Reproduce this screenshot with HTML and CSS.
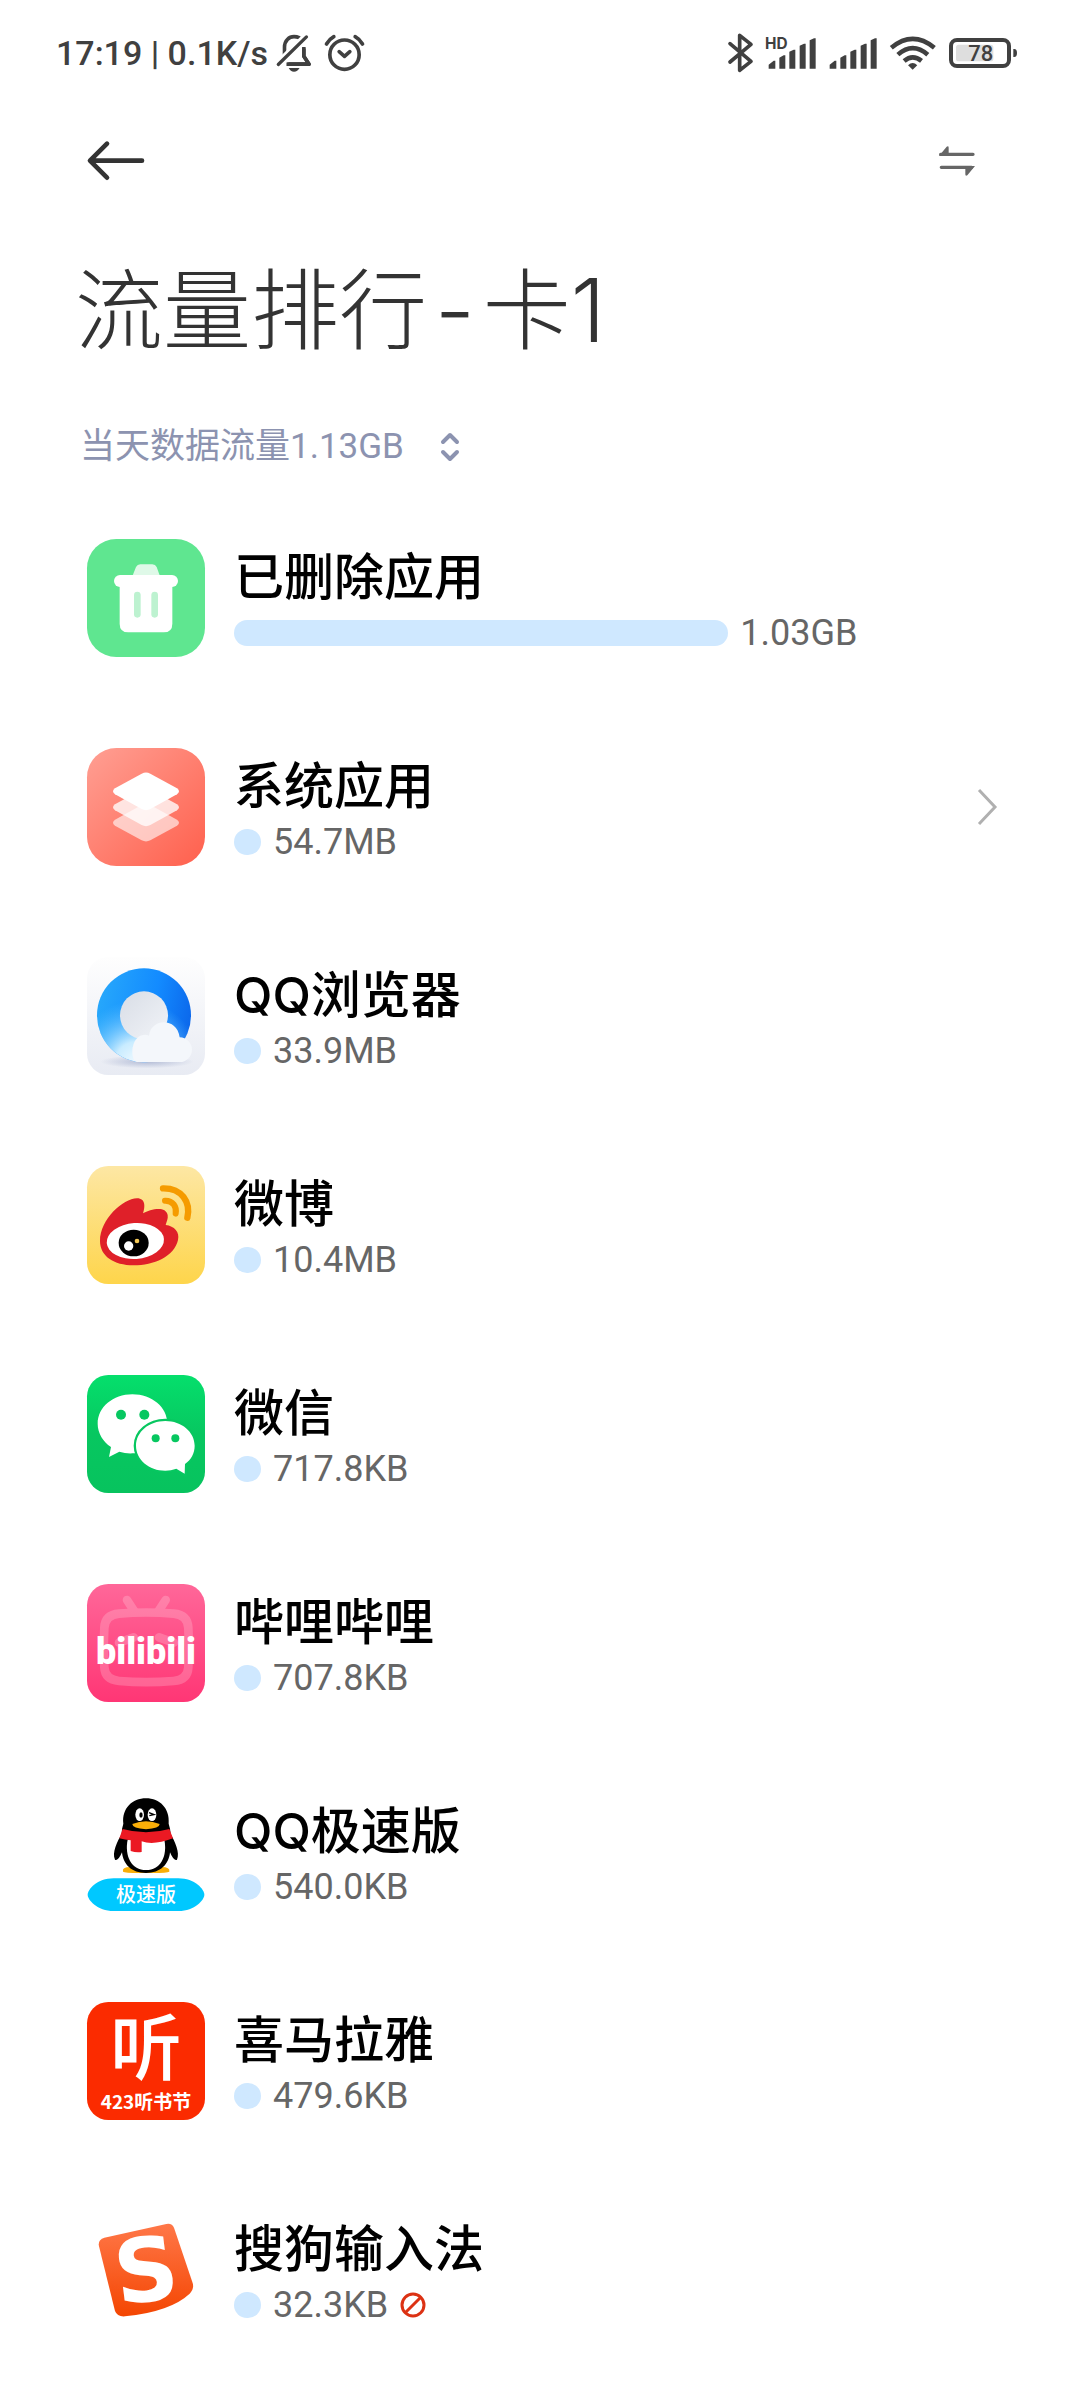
FILE: index.html
```html
<!DOCTYPE html>
<html lang="zh-CN">
<head>
	<meta charset="UTF-8">
	<meta name="viewport" content="width=device-width, initial-scale=1">
	<title>流量排行-卡1</title>
	<link rel="stylesheet" href="styles.css">
</head>
<body>
	<!-- Status bar -->
	<div class="status">
		<div class="status-left">
			<span>17:19 | 0.1K/s</span>
			<svg class="bell" viewBox="697 40 108 116" width="36" height="38">
				<path d="M722 108V80C722 60 736 48 751 48C762 48 771 52 776 60M781 80V108L797 132H728" fill="none" stroke="#404040" stroke-width="11" stroke-linejoin="round"/>
				<path d="M702 134L790 48" stroke="#fff" stroke-width="26"/>
				<path d="M703 133L789 49" stroke="#404040" stroke-width="10" stroke-linecap="round"/>
				<path d="M735 144H768Q762 155 751 155Q740 155 735 144Z" fill="#404040"/>
				<path d="M734 132H797L781 108V84" fill="none" stroke="#404040" stroke-width="11" stroke-linejoin="round"/>
			</svg>
			<svg viewBox="844 38 122 114" width="41" height="38">
				<circle cx="905" cy="100" r="44" fill="none" stroke="#404040" stroke-width="11"/>
				<path d="M889 91L905 105L921 91M851 68Q860 53 873 46M959 68Q950 53 937 46" fill="none" stroke="#404040" stroke-width="11" stroke-linecap="round" stroke-linejoin="round"/>
			</svg>
		</div>
		<div class="status-right">
			<svg viewBox="85 36 75 120" width="25" height="40">
				<path d="M91 68L154 121L120 148V43L154 70L91 123" fill="none" stroke="#404040" stroke-width="11" stroke-linecap="round" stroke-linejoin="round"/>
			</svg>
			<svg viewBox="195 40 150 112" width="50" height="38">
				<text class="hd" x="192" y="84">HD</text>
				<path d="M203 143V131L218 119H223V143ZM235 143V110L248 103H253V143ZM265 143V92L278 86H283V143ZM296 143V74L309 68H314V143ZM326 143V58L339 52H344V143Z" fill="#404040"/>
			</svg>
			<svg viewBox="381 40 144 112" width="48" height="38">
				<path d="M383 143V131L398 119H403V143ZM415 143V110L428 103H433V143ZM445 143V92L458 86H463V143ZM476 143V74L489 68H494V143ZM506 143V58L519 52H524V143Z" fill="#404040"/>
			</svg>
			<svg viewBox="563 40 140 112" width="46" height="38">
				<g fill="none" stroke="#404040" stroke-width="14">
					<path d="M567 80Q632 26 698 80"/>
					<path d="M587 101Q632 61 678 101"/>
					<path d="M606 120Q632 98 659 120"/>
				</g>
				<path d="M618 133Q632 120 646 133L632 147Z" fill="#404040"/>
			</svg>
			<svg viewBox="747 40 204 112" width="68" height="38">
				<rect x="753" y="57" width="174" height="78" rx="18" fill="none" stroke="#404040" stroke-width="12"/>
				<rect x="768" y="71" width="112" height="50" rx="8" fill="#dedede"/>
				<path d="M940 84Q951 82 951 96Q951 110 940 108Z" fill="#404040"/>
				<text class="level" x="842" y="121">78</text>
			</svg>
		</div>
	</div>

	<header class="appbar">
		<button type="button" aria-label="返回">
			<svg viewBox="143 362 174 120" width="58" height="40">
				<path d="M203 370L152 421L203 472M154 421H308" fill="none" stroke="#333" stroke-width="14" stroke-linecap="round" stroke-linejoin="round"/>
			</svg>
		</button>
		<button type="button" aria-label="切换">
			<svg viewBox="717 375 108 90" width="36" height="30">
				<path d="M722 400H819M724 439H815" stroke="#666" stroke-width="10" stroke-linecap="round"/>
				<path d="M717 405L740 377Q746 373 746 380V405ZM825 435L802 463Q796 467 796 460V435Z" fill="#666"/>
			</svg>
		</button>
	</header>

	<main>
		<h1>流量排行<span class="dash">-</span>卡1</h1>

		<div class="filter">
			<select aria-label="统计周期">
				<option>当天数据流量1.13GB</option>
			</select>
			<svg viewBox="0 0 20 30" width="20" height="30">
				<path d="M3 10L10 3L17 10M3 20L10 27L17 20" fill="none" stroke="#8c93b0" stroke-width="4" stroke-linecap="round" stroke-linejoin="round"/>
			</svg>
		</div>

		<ul class="apps">
			<li class="app">
				<svg class="icon" viewBox="0 0 354 354">
					<rect width="354" height="354" rx="88" fill="#5fe690"/>
					<path d="M136 112L147 84Q151 76 160 76H196Q205 76 209 84L219 112Z" fill="#dff9e8"/>
					<rect x="81" y="108" width="192" height="36" rx="18" fill="#fff"/>
					<path d="M98 125H256V254Q256 280 230 280H124Q98 280 98 254Z" fill="#fff"/>
					<rect x="141" y="158" width="20" height="78" rx="10" fill="#bdf2d0"/>
					<rect x="193" y="158" width="20" height="78" rx="10" fill="#bdf2d0"/>
				</svg>
				<div class="info">
					<h2>已删除应用</h2>
					<div class="usage"><span class="bar" style="width: 64.6%"></span>1.03GB</div>
				</div>
			</li>
			<li class="app">
				<svg class="icon" viewBox="0 0 354 354">
					<defs>
						<linearGradient id="sys" x1="0" y1="0" x2="1" y2="1">
							<stop offset="0" stop-color="#ff9f93"/>
							<stop offset="1" stop-color="#ff604d"/>
						</linearGradient>
						<path id="layer" d="M84 121L164 77Q177 70 190 77L270 121Q282 130 270 139L190 183Q177 190 164 183L84 139Q72 130 84 121Z"/>
					</defs>
					<rect width="354" height="354" rx="88" fill="url(#sys)"/>
					<use href="#layer" y="94" fill="#fff" opacity=".6"/>
					<use href="#layer" y="48" fill="#fff" opacity=".78"/>
					<use href="#layer" fill="#fff"/>
				</svg>
				<div class="info">
					<h2>系统应用</h2>
					<div class="usage"><span class="bar" style="width: 0%"></span>54.7MB</div>
				</div>
				<a class="more" href="#system" aria-label="系统应用详情">
					<svg viewBox="0 0 24 40" width="24" height="40">
						<path d="M4 3L20 20L4 37" fill="none" stroke="#b0b0b0" stroke-width="3"/>
					</svg>
				</a>
			</li>
			<li class="app">
				<svg class="icon" viewBox="0 0 354 354">
					<defs>
						<linearGradient id="qbBack" x1="0" y1="0" x2="0" y2="1">
							<stop offset="0" stop-color="#fefefe"/>
							<stop offset="1" stop-color="#e8ebf3"/>
						</linearGradient>
						<linearGradient id="qbRing" x1="0" y1=".3" x2="1" y2=".5">
							<stop offset="0" stop-color="#27a8fb"/>
							<stop offset=".6" stop-color="#138bff"/>
							<stop offset="1" stop-color="#0c69ec"/>
						</linearGradient>
						<radialGradient id="qbFade" cx="150" cy="320" r="190" gradientUnits="userSpaceOnUse">
							<stop offset="0" stop-color="#f2faff"/>
							<stop offset=".35" stop-color="#c9ecff"/>
							<stop offset="1" stop-color="#5cc4ff" stop-opacity="0"/>
						</radialGradient>
						<linearGradient id="qbHole" x1="0" y1="0" x2="1" y2="1">
							<stop offset="0" stop-color="#d8dde6"/>
							<stop offset="1" stop-color="#f2f4f8"/>
						</linearGradient>
						<radialGradient id="qbShadow">
							<stop offset="0" stop-color="#b3bcd6"/>
							<stop offset="1" stop-color="#b3bcd6" stop-opacity="0"/>
						</radialGradient>
					</defs>
					<rect width="354" height="354" rx="64" fill="url(#qbBack)"/>
					<ellipse cx="180" cy="314" rx="140" ry="20" fill="url(#qbShadow)"/>
					<circle cx="171" cy="175" r="141" fill="url(#qbRing)"/>
					<circle cx="171" cy="175" r="141" fill="url(#qbFade)"/>
					<circle cx="171" cy="175" r="72" fill="url(#qbHole)"/>
					<path d="M150 315C130 310 130 250 160 236Q176 230 186 236C192 184 270 180 278 241A37 37 0 0 1 278 315Z" fill="#f4f7fb"/>
				</svg>
				<div class="info">
					<h2>QQ浏览器</h2>
					<div class="usage"><span class="bar" style="width: 0%"></span>33.9MB</div>
				</div>
			</li>
			<li class="app">
				<svg class="icon" viewBox="0 0 354 354">
					<defs>
						<linearGradient id="wb" x1="0" y1="0" x2="0" y2="1">
							<stop offset="0" stop-color="#fde7a4"/>
							<stop offset="1" stop-color="#fed54b"/>
						</linearGradient>
					</defs>
					<rect width="354" height="354" rx="64" fill="url(#wb)"/>
					<path d="M39 225C39 160 108 98 150 97C177 97 174 125 168 142C190 130 236 118 242 147C244 158 238 168 236 177C262 180 279 198 273 222C262 272 200 298 140 298C80 298 39 270 39 225Z" fill="#df2029"/>
					<ellipse cx="145" cy="225" rx="86" ry="54" fill="#fff" transform="rotate(-4 145 225)"/>
					<ellipse cx="140" cy="231" rx="45" ry="40" fill="#000"/>
					<circle cx="125" cy="240" r="14" fill="#fff"/>
					<circle cx="150" cy="225" r="7" fill="#f5c956"/>
					<path d="M228 67C284 66 312 108 301 155" fill="none" stroke="#f59b00" stroke-width="19" stroke-linecap="round"/>
					<path d="M234 104C257 103 270 122 266 143" fill="none" stroke="#f59b00" stroke-width="18" stroke-linecap="round"/>
				</svg>
				<div class="info">
					<h2>微博</h2>
					<div class="usage"><span class="bar" style="width: 0%"></span>10.4MB</div>
				</div>
			</li>
			<li class="app">
				<svg class="icon" viewBox="0 0 354 354">
					<defs>
						<linearGradient id="wx" x1="0" y1="0" x2="0" y2="1">
							<stop offset="0" stop-color="#05df6c"/>
							<stop offset=".5" stop-color="#07c760"/>
							<stop offset="1" stop-color="#07c35e"/>
						</linearGradient>
					</defs>
					<rect width="354" height="354" rx="64" fill="url(#wx)"/>
					<path d="M136 58C78 58 32 97 32 146C32 174 48 200 72 216L66 246L97 230Q116 236 136 235C195 235 241 196 241 146C241 97 195 58 136 58Z" fill="#fff"/>
					<path d="M235 138C284 138 323 171 323 212C323 235 312 254 294 267L293 296L268 281Q252 287 235 287C186 287 147 254 147 212C147 171 186 138 235 138Z" fill="#fff" stroke="#07c760" stroke-width="14" paint-order="stroke"/>
					<g fill="#07c760">
						<circle cx="102" cy="119" r="15"/>
						<circle cx="172" cy="119" r="15"/>
						<circle cx="206" cy="190" r="12"/>
						<circle cx="265" cy="190" r="12"/>
					</g>
				</svg>
				<div class="info">
					<h2>微信</h2>
					<div class="usage"><span class="bar" style="width: 0%"></span>717.8KB</div>
				</div>
			</li>
			<li class="app">
				<svg class="icon" viewBox="0 0 354 354">
					<defs>
						<linearGradient id="bl" x1="0" y1="0" x2="0" y2="1">
							<stop offset="0" stop-color="#ff6799"/>
							<stop offset="1" stop-color="#ff3675"/>
						</linearGradient>
					</defs>
					<rect width="354" height="354" rx="64" fill="url(#bl)"/>
					<g fill="none" stroke="#fff" stroke-width="26" stroke-linecap="round" opacity=".2">
						<path d="M120 48L142 82M236 48L214 82"/>
						<path d="M96 89Q178 82 260 89Q302 92 304 132Q308 192 304 250Q302 287 260 291Q178 298 96 291Q54 287 52 250Q48 192 52 132Q54 92 96 89Z"/>
						<path d="M96 176L140 160M216 160L260 176"/>
					</g>
					<text class="bili" x="177" y="240">bilibili</text>
				</svg>
				<div class="info">
					<h2>哔哩哔哩</h2>
					<div class="usage"><span class="bar" style="width: 0%"></span>707.8KB</div>
				</div>
			</li>
			<li class="app">
				<svg class="icon" viewBox="0 0 354 354">
					<path d="M108 236Q104 222 130 222H224Q250 222 247 236Q240 241 177 240Q114 241 108 236Z" fill="#f9ae08"/>
					<path d="M109 92C104 46 136 16 177 16C218 16 249 46 245 92Q250 106 251 124C263 144 280 180 270 200C264 206 254 190 249 178C246 214 220 240 177 240C134 240 108 214 105 178C100 190 90 206 84 200C74 180 91 144 104 124Q104 106 109 92Z" fill="#000"/>
					<path d="M122 140H232C242 190 220 231 177 231C134 231 112 190 122 140Z" fill="#fff"/>
					<path d="M107 108Q177 128 247 108L258 136Q200 158 164 145V177Q148 180 131 174V142Q114 140 97 136Z" fill="#eb1923"/>
					<ellipse cx="158" cy="65" rx="13" ry="19" fill="#fff"/>
					<ellipse cx="195" cy="65" rx="13" ry="19" fill="#fff"/>
					<ellipse cx="162" cy="66" rx="5" ry="8" fill="#000"/>
					<path d="M186 59L201 65L187 68" fill="none" stroke="#000" stroke-width="4"/>
					<path d="M136 93Q177 77 218 93Q218 106 177 109Q136 106 136 93Z" fill="#f9ae08"/>
					<path d="M2 305C2 290 30 256 80 256H274C324 256 352 290 352 305C352 320 324 354 274 354H80C30 354 2 320 2 305Z" fill="#00c8ff"/>
					<text class="banner" x="177" y="328">极速版</text>
				</svg>
				<div class="info">
					<h2>QQ极速版</h2>
					<div class="usage"><span class="bar" style="width: 0%"></span>540.0KB</div>
				</div>
			</li>
			<li class="app">
				<svg class="icon" viewBox="0 0 354 354">
					<rect width="354" height="354" rx="64" fill="#fb2b00"/>
					<text class="ting" x="177" y="216">听</text>
					<text class="fest" x="177" y="320">423听书节</text>
				</svg>
				<div class="info">
					<h2>喜马拉雅</h2>
					<div class="usage"><span class="bar" style="width: 0%"></span>479.6KB</div>
				</div>
			</li>
			<li class="app">
				<svg class="icon" viewBox="0 0 354 354">
					<defs>
						<linearGradient id="sg" x1="0" y1="0" x2="0" y2="1">
							<stop offset="0" stop-color="#ff7748"/>
							<stop offset="1" stop-color="#f44602"/>
						</linearGradient>
					</defs>
					<path d="M52 80L238 39Q255 36 261 50L317 216Q322 234 308 248Q250 302 114 316Q91 318 84 300L36 106Q32 86 52 80Z" fill="url(#sg)"/>
					<text class="sogou" x="177" y="270" transform="rotate(-7 177 177)">S</text>
				</svg>
				<div class="info">
					<h2>搜狗输入法</h2>
					<div class="usage">
						<span class="bar" style="width: 0%"></span>32.3KB
						<svg viewBox="0 0 26 26" width="26" height="26">
							<circle cx="13" cy="13" r="11" fill="none" stroke="#dc3214" stroke-width="3"/>
							<path d="M5 21L21 5" stroke="#dc3214" stroke-width="3"/>
						</svg>
					</div>
				</div>
			</li>
		</ul>
	</main>
</body>
</html>
```
FILE: styles.css
```css
body {
	margin: 0;
	background-color: #fff;
	color: #333;
	font-family: Roboto, "Noto Sans CJK SC", sans-serif;
}
svg {
	display: block;
	flex: none;
	overflow: visible;
}
button {
	padding: 0;
	border: 0;
	background: none;
}

/* Status bar */
.status {
	display: flex;
	justify-content: space-between;
	align-items: center;
	height: 105px;
	padding: 0 63px 0 56px;
	color: #404040;
	font: 500 34px Roboto, sans-serif;
}
.status-left {
	display: flex;
	align-items: center;
	gap: 12px;
}
.status-left .bell {
	margin-left: -4px;
}
.status-right {
	display: flex;
	align-items: center;
	gap: 13px;
}
.hd {
	fill: #404040;
	font: 700 46px Inter, sans-serif;
}
.level {
	fill: #404040;
	font: 500 66px Roboto, sans-serif;
	text-anchor: middle;
}

/* Top buttons */
.appbar {
	display: flex;
	justify-content: space-between;
	align-items: center;
	height: 112px;
	padding: 0 105px 0 87px;
}

h1 {
	margin: 43px 75px 0;
	font: 300 88px/100px Inter, "Noto Sans CJK SC", sans-serif;
}
.dash {
	margin: 0 8px;
}

.filter {
	display: flex;
	align-items: center;
	gap: 36px;
	margin: 67px 80px 0;
}
.filter select {
	height: 40px;
	padding: 0;
	border: 0;
	background: none;
	appearance: none;
	color: #8c93b0;
	font: 400 35px/40px Roboto, "Noto Sans CJK SC", sans-serif;
}

/* App list */
.apps {
	display: flex;
	flex-direction: column;
	gap: 91px;
	margin: 72px 81px 71px 87px;
	padding: 0;
	list-style: none;
}
.app {
	display: flex;
	gap: 29px;
}
.icon {
	width: 118px;
	height: 118px;
}
.info {
	flex: 1;
	padding-top: 10px;
}
.info h2 {
	margin: 0 0 8px;
	color: #000;
	font: 500 50px/56px Inter, "Noto Sans CJK SC", sans-serif;
}
.usage {
	display: flex;
	align-items: center;
	gap: 12px;
	color: #666;
	font-size: 36px;
	line-height: 40px;
}
.bar {
	min-width: 27px;
	height: 26px;
	border-radius: 13px;
	background-color: #cfe8ff;
}
.more {
	align-self: center;
}

/* Lettering inside the app icons */
.bili,
.banner,
.ting,
.fest,
.sogou {
	fill: #fff;
	text-anchor: middle;
}
.bili {
	font: 900 108px Roboto, sans-serif;
}
.banner {
	font: 500 60px "Noto Sans CJK SC", sans-serif;
}
.ting {
	font: 500 215px "Noto Sans CJK SC", sans-serif;
}
.fest {
	font: 700 57px "Noto Sans CJK SC", sans-serif;
}
.sogou {
	font: 700 265px "DejaVu Sans", sans-serif;
}
```
